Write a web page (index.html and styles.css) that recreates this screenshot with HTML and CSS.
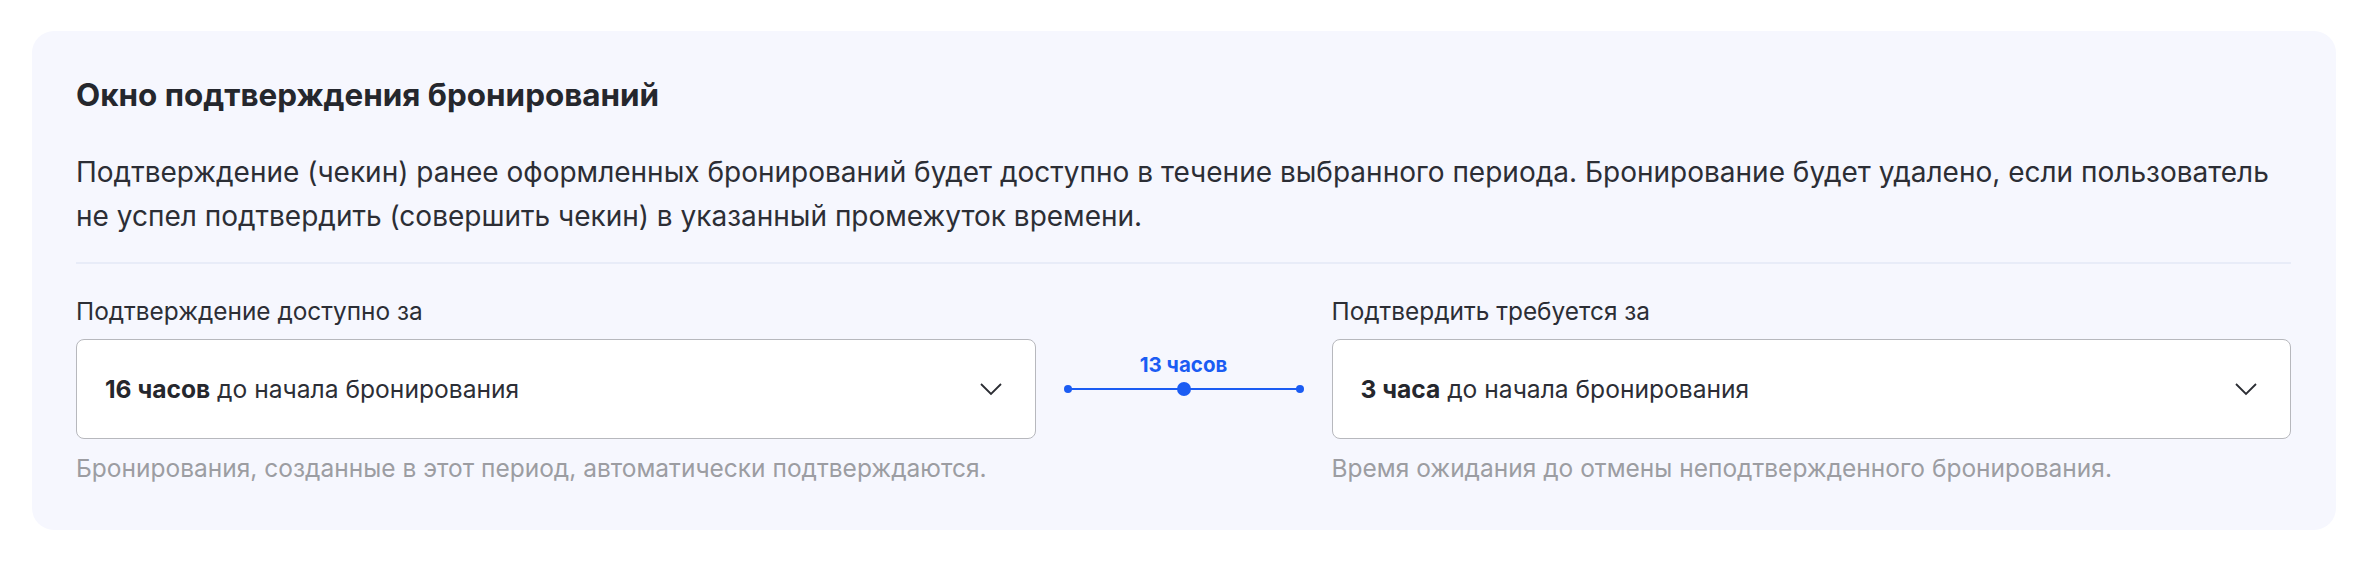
FILE: index.html
```html
<!DOCTYPE html>
<html lang="ru">
<head>
<meta charset="UTF-8">
<title>Окно подтверждения бронирований</title>
<link rel="stylesheet" href="styles.css">
</head>
<body>

<section class="panel">
    <h2 class="panel-title">Окно подтверждения бронирований</h2>
    <p class="panel-text">Подтверждение (чекин) ранее оформленных бронирований будет доступно в течение выбранного периода. Бронирование будет удалено, если пользователь не успел подтвердить (совершить чекин) в указанный промежуток времени.</p>

    <div class="window-grid">
        <div class="field">
            <label class="field-label">Подтверждение доступно за</label>
            <div class="select">
                <span><b>16 часов</b> до начала бронирования</span>
                <svg class="chevron" width="22" height="13" viewBox="0 0 22 13"><polyline points="1,1 11,11 21,1" fill="none" stroke="#2b2d33" stroke-width="1.8"/></svg>
            </div>
            <div class="field-hint">Бронирования, созданные в этот период, автоматически подтверждаются.</div>
        </div>

        <div class="window-range">
            <div class="range">
                <div class="range-value">13 часов</div>
                <div class="range-track">
                    <span class="range-thumb"></span>
                </div>
            </div>
        </div>

        <div class="field">
            <label class="field-label">Подтвердить требуется за</label>
            <div class="select">
                <span><b>3 часа</b> до начала бронирования</span>
                <svg class="chevron" width="22" height="13" viewBox="0 0 22 13"><polyline points="1,1 11,11 21,1" fill="none" stroke="#2b2d33" stroke-width="1.8"/></svg>
            </div>
            <div class="field-hint">Время ожидания до отмены неподтвержденного бронирования.</div>
        </div>
    </div>
</section>

</body>
</html>
```

FILE: styles.css
```css
body {
    margin: 0;
    padding: 31px 36px 0 32px;
    font-family: Inter, "Noto Sans", Arial, sans-serif;
    color: #2c2e35;
    background: #fff;
}
.panel {
    background: #f6f7fe;
    border-radius: 22px;
    padding: 44px 45px 46px 44px;
}
.panel-title {
    margin: 0;
    font-size: 31.4px;
    line-height: 40px;
    font-weight: 700;
    color: #25272d;
}
.panel-text {
    margin: 35px 0 0;
    font-size: 28px;
    line-height: 44px;
    padding-bottom: 24px;
    border-bottom: 2px solid #e8ecf8;
}
.window-grid {
    display: grid;
    grid-template-columns: 1fr 296px 1fr;
    margin-top: 31px;
}
.field {
    display: flex;
    flex-direction: column;
}
.field-label {
    font-size: 24.4px;
    line-height: 32px;
    margin-bottom: 12px;
}
.select {
    height: 100px;
    box-sizing: border-box;
    background: #fff;
    border: 1px solid #b7b8bd;
    border-radius: 8px;
    padding: 0 33px 0 28px;
    display: flex;
    align-items: center;
    justify-content: space-between;
    font-size: 24.6px;
}
.select b {
    font-weight: 700;
    color: #25272d;
}
.field-hint {
    margin-top: 13px;
    font-size: 24.5px;
    line-height: 32px;
    color: #9c9da2;
}
.window-range {
    padding: 44px 32px 0;
}
.range {
    height: 100px;
    display: grid;
    grid-template-rows: 1fr 2px 1fr;
}
.range-value {
    align-self: end;
    text-align: center;
    margin-bottom: 11px;
    font-size: 20.5px;
    line-height: 24px;
    font-weight: 700;
    color: #1b5cf3;
}
.range-track {
    position: relative;
    background: #1b5cf3;
}
.range-track::before,
.range-track::after {
    content: "";
    position: absolute;
    top: -3px;
    width: 8px;
    height: 8px;
    border-radius: 50%;
    background: #1b5cf3;
}
.range-track::before { left: -4px; }
.range-track::after { right: -4px; }
.range-thumb {
    position: absolute;
    left: 50%;
    top: -6px;
    width: 14px;
    height: 14px;
    margin-left: -7px;
    border-radius: 50%;
    background: #1b5cf3;
}
```
